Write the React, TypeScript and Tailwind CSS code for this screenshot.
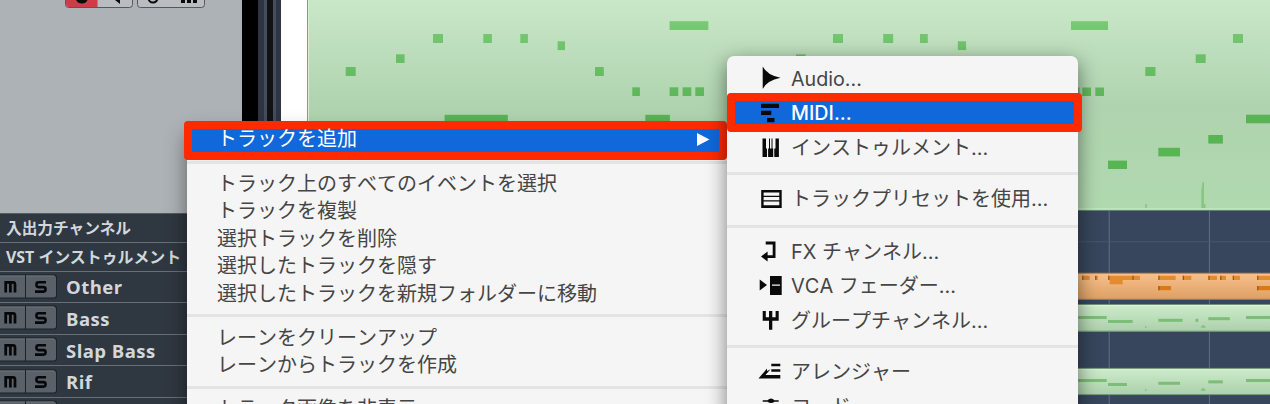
import type { ReactNode } from "react";

type Note = [x: number, y: number, width: number, height: number];

const mainNotes: Note[] = [
  [345.7, 67, 10, 9],
  [396, 54.3, 8.6, 8.7],
  [433, 34, 10, 9],
  [483.3, 34, 8.6, 9],
  [520.3, 34, 7.6, 9],
  [557.6, 41.3, 7.4, 8.8],
  [595, 67, 8.8, 9],
  [632.3, 87.3, 7.6, 8.7],
  [669.6, 87.3, 8.7, 8.7],
  [682.6, 87.3, 8.7, 8.7],
  [695.3, 87.3, 8.7, 8.7],
  [669.6, 21.2, 38.7, 8.8],
  [444.6, 114.8, 63.2, 9],
  [645.3, 114.8, 24.6, 9],
  [796, 54.3, 9.6, 8.7],
  [833, 34, 10, 9],
  [883.2, 34, 10, 9],
  [920, 34, 7.8, 9],
  [957.8, 41.3, 8.3, 8.8],
  [1071, 21.2, 37, 8.8],
  [1195.7, 54.3, 10, 8.7],
  [1233, 34, 10, 9],
  [1145.3, 67, 10.2, 9],
  [1071, 87.5, 8.6, 8.5],
  [1082.3, 87.5, 8.7, 8.5],
  [1095.3, 87.5, 8.7, 8.5],
  [1246, 114.7, 24, 8.6],
  [1208.3, 135, 14.6, 8.6],
  [1158.3, 147.8, 21.7, 8.6],
  [1108, 160.6, 19, 8.4],
];

const orangeNotes: Note[] = [
  [1082, 275.8, 7.6, 4.2],
  [1095, 275.8, 2.7, 4.2],
  [1108, 275.8, 26, 4.2],
  [1109.7, 280, 13, 4.3],
  [1132.3, 275.8, 7.6, 4.2],
  [1158.3, 275.8, 17.3, 4.2],
  [1182.7, 275.8, 8.6, 4.2],
  [1208.3, 275.8, 8.7, 4.2],
  [1220, 275.8, 6, 4.2],
  [1232.7, 275.8, 7.3, 4.2],
  [1257, 275.8, 13, 4.2],
];

const orangeLowNotes: Note[] = [
  [1158.3, 286, 12.8, 4.2],
  [1257, 286, 13, 4.2],
];

const bassNotes: Note[] = [
  [1076, 316, 30.7, 3],
  [1108, 320, 24.7, 3],
  [1158.3, 318.8, 24.3, 3],
  [1195.5, 318.8, 2.8, 3],
  [1208.3, 317.2, 21.5, 3],
  [1246, 316, 24, 3],
];

const rifNotes: Note[] = [
  [1076, 379, 30.7, 3],
  [1108, 383, 19, 3],
  [1158.3, 381.8, 21.7, 3],
  [1208.3, 380.4, 14.5, 3],
  [1246, 379, 24, 3],
];

function Notes({ notes, className }: { notes: Note[]; className: string }) {
  return (
    <g className={className}>
      {notes.map(([x, y, width, height]) => (
        <rect key={`${x}-${y}`} x={x} y={y} width={width} height={height} />
      ))}
    </g>
  );
}

function Arrangement() {
  return (
    <svg viewBox="307 0 963 404" className="block h-[404px] w-[963px] shrink-0">
      <defs>
        <linearGradient id="clip" x1="0" y1="0" x2="0" y2="1">
          <stop offset="0" stopColor="#c9e8c8" />
          <stop offset="0.5" stopColor="#afd3af" />
          <stop offset="1" stopColor="#b0d9af" />
        </linearGradient>
        <linearGradient id="smallClip" x1="0" y1="0" x2="0" y2="1">
          <stop offset="0" stopColor="#cdeccb" />
          <stop offset="1" stopColor="#acd0ab" />
        </linearGradient>
        <linearGradient id="orangeClip" x1="0" y1="0" x2="0" y2="1">
          <stop offset="0" stopColor="#f8c08c" />
          <stop offset="1" stopColor="#dda063" />
        </linearGradient>
        <linearGradient id="note" gradientUnits="userSpaceOnUse" x1="0" y1="20" x2="0" y2="170">
          <stop offset="0" stopColor="#78ca74" />
          <stop offset="0.6" stopColor="#5ab355" />
          <stop offset="1" stopColor="#56b651" />
        </linearGradient>
      </defs>
      <rect x="307" y="0" width="963" height="404" fill="#37465c" />
      <path d="M1109.2 211V404M1209.4 211V404" stroke="#5f7089" strokeWidth="1" />
      <path d="M1078 241.8H1270" stroke="#46566d" strokeWidth="1" />
      <rect x="307" y="0" width="963" height="210.5" fill="url(#clip)" />
      <path d="M307.5 0V210" stroke="#7ba27a" />
      <path d="M308.5 0V210" stroke="#d9f0d8" />
      <path d="M307 208.8H1270" stroke="#c5e8c4" />
      <path d="M307 210.5H1270" stroke="#5f8270" />
      <Notes notes={mainNotes} className="fill-[url(#note)]" />
      <path d="M1145.3 204h1.7v4h-1.7zM1201.3 190l1.3-8h1.4v22h1.5v4h-4.2z" fill="#86c783" />

      <rect x="1070" y="273" width="200" height="26.5" fill="url(#orangeClip)" />
      <path d="M1070 273.2H1270M1070 299.3H1270" stroke="#a77546" />
      <Notes notes={orangeNotes} className="fill-[#e58a30]" />
      <Notes notes={orangeLowNotes} className="fill-[#d9791a]" />
      <path
        d="M1082.8 275.8v4.2M1095.8 275.8v4.2M1108.8 275.8v4.2M1133 275.8v4.2M1159 275.8v4.2M1183.4 275.8v4.2M1209 275.8v4.2M1220.8 275.8v4.2M1233.4 275.8v4.2M1257.8 275.8v4.2M1159 286v4.2M1257.8 286v4.2"
        stroke="#9c5513"
        strokeWidth="1.2"
      />

      <rect x="1070" y="304" width="200" height="27.5" fill="url(#smallClip)" />
      <path d="M1070 304.5H1270M1070 331.2H1270" stroke="#6d9474" />
      <path d="M1070 305.7H1270" stroke="#e0f6df" />
      <Notes notes={bassNotes} className="fill-[#7cbd77]" />
      <path d="M1145 328v-2h1.5v2zM1201 328v-1.5l1.5-1.5h1.5l1.5 1.5v1.5z" fill="#86c783" />

      <rect x="1070" y="368" width="200" height="27" fill="url(#smallClip)" />
      <path d="M1070 368.4H1270M1070 394.6H1270" stroke="#6d9474" />
      <path d="M1070 369.5H1270" stroke="#d6f1d5" />
      <Notes notes={rifNotes} className="fill-[#7cbd77]" />
      <path d="M1145 391v-2h1.5v2zM1201 391v-1.5l1.5-1.5h1.5l1.5 1.5v1.5z" fill="#86c783" />
    </svg>
  );
}

function TransportButtons() {
  return (
    <div className="flex h-2 shrink-0 items-end gap-1 pl-[65px]">
      <svg viewBox="0 0 68 8" className="h-2 w-[68px]">
        <path d="M.5 -4V4.5a3 3 0 0 0 3 3H64.5a3 3 0 0 0 3-3V-4" fill="#b9bdc1" stroke="#55585c" />
        <path d="M1 0H32.5V7H3.5A2.5 2.5 0 0 1 1 4.500Z" fill="#cc3d47" />
        <path d="M11 0Q13 3.500 17 3.500T22.500 0ZM50 0l5 4V0Z" fill="#0a0a0a" />
      </svg>
      <svg viewBox="0 0 68 8" className="h-2 w-[68px]">
        <path d="M.5 -4V4.5a3 3 0 0 0 3 3H64.5a3 3 0 0 0 3-3V-4" fill="#b9bdc1" stroke="#55585c" />
        <path d="M11.5 -2a4.5 4.5 0 0 0 9 0" fill="none" stroke="#0a0a0a" strokeWidth="2" />
        <path d="M44 0h4v3h-4zM50 0h4v3h-4zM56 0h4v3h-4z" fill="#0a0a0a" />
      </svg>
    </div>
  );
}

function MuteSolo() {
  return (
    <svg viewBox="0 0 58 26" className="block h-[26px] w-[58px] shrink-0">
      <rect x="-5" y=".5" width="62" height="24" rx="3" fill="#1b222b" />
      <rect x="-5" y="1.5" width="30" height="22" fill="#5a6168" />
      <path d="M26 1.5H53.5a2.5 2.5 0 0 1 2.5 2.5V21a2.5 2.5 0 0 1-2.5 2.5H26Z" fill="#5a6168" />
      <path d="M0 2H25M26 2H54" stroke="#6b7279" />
      <path d="M5.700 18.5V8.3H13a2 2 0 0 1 2 2V18.5M10.400 8.5V18.5" fill="none" stroke="#06080a" strokeWidth="2.7" />
      <path
        d="M46 8.3H38.5a2 2 0 0 0-2 2v.8a2 2 0 0 0 2 2H43.5a2 2 0 0 1 2 2v.5a2 2 0 0 1-2 2H35"
        fill="none"
        stroke="#06080a"
        strokeWidth="2.6"
      />
    </svg>
  );
}

function Track({ name }: { name: string }) {
  return (
    <div className="flex h-[31.6px] shrink-0 items-center border-b border-[#667079]">
      <MuteSolo />
      <span className="pt-px pl-2 font-['Open_Sans',sans-serif] text-[18.5px] font-bold tracking-[0.45px]">{name}</span>
    </div>
  );
}

function TrackList() {
  return (
    <div className="flex flex-1 flex-col overflow-hidden border-t border-[#555c64] bg-[#2f3740] whitespace-nowrap text-[#d3d7dc]">
      <div className="h-[29px] shrink-0 border-b border-[#667079] pl-[6px] font-['Noto_Sans_CJK_JP',sans-serif] text-[15.7px] leading-[27px] font-bold">
        入出力チャンネル
      </div>
      <div className="h-[28.5px] shrink-0 border-b border-[#667079] pl-[6px] font-['Open_Sans','Noto_Sans_CJK_JP',sans-serif] text-[15.9px] leading-[28px] font-bold">
        VST インストゥルメント
      </div>
      <Track name="Other" />
      <Track name="Bass" />
      <Track name="Slap Bass" />
      <Track name="Rif" />
      <Track name="" />
    </div>
  );
}

function Separator({ className }: { className: string }) {
  return <div className={`h-[3px] shrink-0 bg-[#e4e4e4] ${className}`} />;
}

function ContextItem({ children }: { children: ReactNode }) {
  return <div className="h-[27.5px] shrink-0 pl-[30px] leading-[27px]">{children}</div>;
}

function ContextMenu() {
  return (
    <div className="absolute top-[121px] left-[184px] w-[543px] font-['Noto_Sans_CJK_JP',sans-serif] text-[20px] whitespace-nowrap text-[#454545] [font-kerning:none]">
      <div className="relative z-10 flex h-[39px] items-center justify-between rounded-[4px] border-8 border-[#ff2a00] bg-[#1068da] pr-[9px] pl-[25px] text-white">
        <span className="-mt-[5px] leading-[22px]">トラックを追加</span>
        <svg viewBox="0 0 13 13" className="-mt-[2px] h-[13px] w-[13px]">
          <path d="M0 0L12.500 6.500L0 13Z" fill="white" />
        </svg>
      </div>
      <div className="-mt-8 ml-[3px] flex h-[290px] w-[540px] flex-col bg-[#f5f5f5] pt-8 shadow-[0_6px_20px_rgba(0,0,0,0.45)]">
        <Separator className="mt-px mb-[4.5px]" />
        <ContextItem>トラック上のすべてのイベントを選択</ContextItem>
        <ContextItem>トラックを複製</ContextItem>
        <ContextItem>選択トラックを削除</ContextItem>
        <ContextItem>選択したトラックを隠す</ContextItem>
        <ContextItem>選択したトラックを新規フォルダーに移動</ContextItem>
        <Separator className="mt-[8px] mb-[5.5px]" />
        <ContextItem>レーンをクリーンアップ</ContextItem>
        <ContextItem>レーンからトラックを作成</ContextItem>
        <Separator className="mt-[8px] mb-[5px]" />
        <ContextItem>トラック画像を非表示</ContextItem>
      </div>
    </div>
  );
}

function Icon({ children }: { children: ReactNode }) {
  return (
    <svg viewBox="0 0 24 24" className="h-6 w-6 shrink-0 fill-[#0a0a0a]">
      {children}
    </svg>
  );
}

function SubItem({ icon, children }: { icon: ReactNode; children: ReactNode }) {
  return (
    <div className="flex h-[34.5px] shrink-0 items-center pl-[31px]">
      <Icon>{icon}</Icon>
      <span className="pl-[9px] leading-[34px]">{children}</span>
    </div>
  );
}

function TrackTypeMenu() {
  return (
    <div className="absolute top-[56px] left-[727px] z-20 flex h-[360px] w-[351px] flex-col rounded-t-[7px] bg-[#f5f5f5] pt-[5px] font-['Inter','Noto_Sans_CJK_JP',sans-serif] text-[20px] whitespace-nowrap text-[#454545] shadow-[0_6px_20px_rgba(0,0,0,0.5)] [font-kerning:none]">
      <SubItem icon={<path d="M4.7 0.5Q9 9 22.5 11.8Q9 14.500 4.700 23Z" />}>
        <span className="relative top-px text-[19.7px]">Audio...</span>
      </SubItem>
      <div className="-mt-[2.5px] -mr-[4px] flex h-[39px] w-[355px] shrink-0 items-center rounded-[4px] border-8 border-[#ff2a00] bg-[#1068da] pl-[23px] text-white">
        <Icon>
          <path d="M3 2.7H21V7H3ZM3 9.8H13.3V14H3ZM9 17H16.5V21.3H9Z" />
        </Icon>
        <span className="pt-px pl-[9px] text-[19.7px] leading-6 font-medium">MIDI...</span>
      </div>
      <div className="-mt-[1.5px]">
        <SubItem icon={<path d="M4.5 2.5H8V12.5H9V21H4.5ZM11 2.5H12V12.5H13.5V2.5H14.500V12.500H15.200V21H10.100V12.500H11ZM17.500 2.500H20.900V21H16.300V12.500H17.500Z" />}>
          インストゥルメント...
        </SubItem>
      </div>
      <Separator className="mt-[7px] mb-[7px]" />
      <SubItem
        icon={<path fillRule="evenodd" d="M3.2 3H23.7V21H3.2ZM5.600 5.500V8.700H21.300V5.500ZM5.600 10V13.300H21.300V10ZM5.600 14.600V18.200H21.300V14.600Z" />}
      >
        トラックプリセットを使用...
      </SubItem>
      <Separator className="mt-[8px] mb-[7px]" />
      <SubItem icon={<path d="M7.7 1.500H17.500V18H9.600V21.500L3 16.500L9.600 11.500V15.300H14.700V4.400H7.700Z" />}>
        FX チャンネル...
      </SubItem>
      <SubItem icon={<path fillRule="evenodd" d="M1.7 5.500L9 11L1.700 16.500ZM12 2H23.700V21H12ZM14 10.600V11.800H22V10.600Z" />}>
        VCA フェーダー...
      </SubItem>
      <SubItem icon={<path d="M4.7 2H7.800V8.300H11V2H14.300V8.300H17.600V2H20.700V11.700H14.300V20.700H11V11.700H4.700Z" />}>
        グループチャンネル...
      </SubItem>
      <Separator className="mt-[7px] mb-[7px]" />
      <SubItem icon={<path d="M0.500 18.500L9 8.500V11L12.500 9.300L7.500 15H22.300V18.500ZM13.300 3.700H22.300V6.200H13.300ZM13.300 9.200H22.300V11.700H13.300Z" />}>
        アレンジャー
      </SubItem>
      <SubItem icon={<path d="M4.700 5.300H9.500Q13 1.500 16.500 5.300H20.700V6.700H16.500Q13 9.500 9.500 6.700H4.700Z" />}>コード</SubItem>
    </div>
  );
}

export default function App() {
  return (
    <div className="relative flex h-[404px] w-[1270px] overflow-hidden bg-white">
      <div className="flex w-[242px] shrink-0 flex-col bg-[#adb2b6]">
        <TransportButtons />
        <div className="h-[205px] shrink-0" />
        <TrackList />
      </div>
      <div className="flex w-[39px] shrink-0">
        <div className="w-4 bg-black" />
        <div className="w-[6px] bg-[#2c3541]" />
        <div className="w-[3px] bg-[#454d5b]" />
        <div className="w-[6px] bg-[#111214]" />
        <div className="w-[3px] bg-[#454d5b]" />
        <div className="w-[5px] bg-[#2c3541]" />
      </div>
      <div className="w-[26px] shrink-0 bg-white" />
      <Arrangement />
      <ContextMenu />
      <TrackTypeMenu />
    </div>
  );
}
